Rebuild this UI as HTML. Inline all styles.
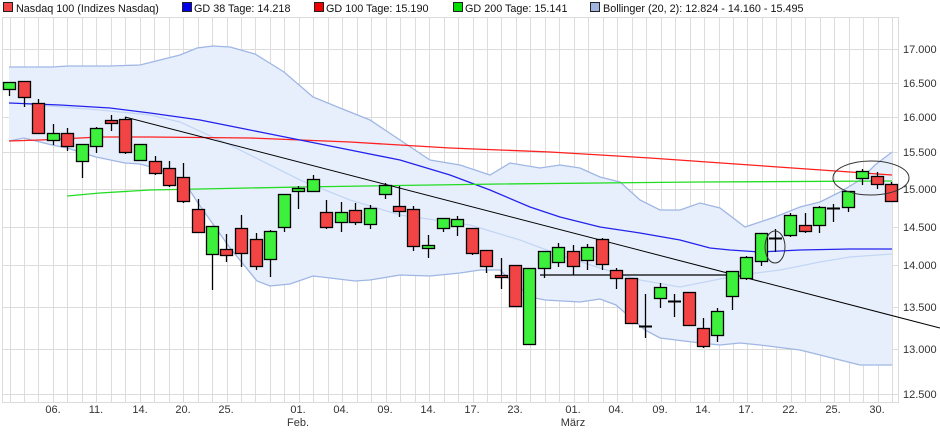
<!DOCTYPE html>
<html><head><meta charset="utf-8"><style>
html,body{margin:0;padding:0;background:#fff;width:940px;height:435px;overflow:hidden}
svg{display:block;font-family:"Liberation Sans",sans-serif}
</style></head><body>
<svg id="c" width="940" height="435" xmlns="http://www.w3.org/2000/svg">
<g id="grid" stroke="#dcdcdc" stroke-width="1"></g>
<path id="band" fill="#e8effc" stroke="none"/>
<polyline id="bu" fill="none" stroke="#9fb6e4" stroke-width="1.3"/>
<polyline id="bl" fill="none" stroke="#9fb6e4" stroke-width="1.3"/>
<polyline fill="none" stroke="#c3d6f5" stroke-width="1.3" points="24,104 100,110 150,115 180,122 230,145 260,160 300,180 350,200 400,215 470,225 520,240 560,255 600,268 640,280 680,287 700,283 740,275 780,270 820,262 850,257 892,254"/>
<polyline fill="none" stroke="#ff2020" stroke-width="1.3" points="9,141 40,140 100,137 150,137 250,138 350,142 450,148 550,152 650,158 750,165 850,172 892,175"/>
<polyline fill="none" stroke="#2222ee" stroke-width="1.3" points="9,103 60,105 110,108 150,113 200,120 260,132 300,140 350,150 400,160 450,175 490,190 530,207 560,217 600,227 640,233 680,240 710,248 730,250 760,252 800,250 850,249 892,249"/>
<polyline fill="none" stroke="#22dd22" stroke-width="1.3" points="67,196 100,193 150,190 200,189 300,187 500,184 700,182 892,181"/>
<line x1="125" y1="117" x2="940" y2="328" stroke="#000" stroke-width="1"/>
<line x1="540" y1="275" x2="728" y2="275" stroke="#000" stroke-width="1.3"/>
<g id="candles"></g>
<ellipse cx="775" cy="247" rx="10" ry="16" fill="none" stroke="#333" stroke-width="1"/>
<ellipse cx="871" cy="178" rx="38" ry="17" fill="none" stroke="#333" stroke-width="1"/>
<g font-size="11" fill="#333">
<text x="903" y="53">17.000</text><text x="903" y="87">16.500</text><text x="903" y="121">16.000</text>
<text x="903" y="156">15.500</text><text x="903" y="193">15.000</text><text x="903" y="231">14.500</text>
<text x="903" y="269">14.000</text><text x="903" y="311">13.500</text><text x="903" y="353">13.000</text>
<text x="903" y="398">12.500</text>
</g>
<g font-size="11" fill="#333" text-anchor="middle" id="xl"></g>
<g font-size="10.8" fill="#111">
<rect x="3.5" y="2.5" width="9" height="9" fill="#f24444" stroke="#222"/><text x="16" y="12">Nasdaq 100 (Indizes Nasdaq)</text>
<rect x="182.5" y="2.5" width="9" height="9" fill="#0000ee" stroke="#222"/><text x="194" y="12">GD 38 Tage: 14.218</text>
<rect x="314.5" y="2.5" width="9" height="9" fill="#ee0000" stroke="#222"/><text x="326" y="12">GD 100 Tage: 15.190</text>
<rect x="453.5" y="2.5" width="9" height="9" fill="#00dd00" stroke="#222"/><text x="465" y="12">GD 200 Tage: 15.141</text>
<rect x="590.5" y="2.5" width="9" height="9" fill="#9fb4e0" stroke="#222"/><text x="603" y="12">Bollinger (20, 2): 12.824 - 14.160 - 15.495</text>
</g>
</svg>
<script>
var NS="http://www.w3.org/2000/svg";
function el(t,a,p){var e=document.createElementNS(NS,t);for(var k in a)e.setAttribute(k,a[k]);p.appendChild(e);return e;}
var g=document.getElementById('grid');
for(var x=9.5;x<900;x+=14.47){el('line',{x1:Math.round(x)+.5,y1:17,x2:Math.round(x)+.5,y2:403},g);}
el('line',{x1:2.5,y1:17,x2:2.5,y2:403},g);el('line',{x1:898.5,y1:17,x2:898.5,y2:403},g);
[17,49,83,117,152,189,227,265,307,349,394,402].forEach(function(y){el('line',{x1:2,y1:y+.5,x2:899,y2:y+.5},g);});
var up="9,67 52,67 68,66 110,66 140,65 180,55 197,48 213,46 230,47 255,54 284,72 313,97 340,108 370,120 385,130 400,140 430,160 460,165 490,175 510,163 540,168 560,165 580,168 600,177 620,182 640,200 660,210 680,210 700,203 720,208 745,227 760,222 775,217 800,207 820,202 840,192 860,180 875,165 892,152";
var lo="9,141 24,138 52,145 67,148 96,157 125,163 140,164 155,168 183,180 198,203 230,248 257,281 270,286 290,284 313,276 330,278 355,281 370,280 400,275 430,276 460,273 480,270 500,270 515,285 535,298 545,300 580,302 600,299 616,305 645,330 660,338 700,343 720,345 740,343 760,345 800,350 820,355 840,360 860,365 892,365";
document.getElementById('bu').setAttribute('points',up);
document.getElementById('bl').setAttribute('points',lo);
var lr=lo.split(' ').reverse().join(' L');
document.getElementById('band').setAttribute('d','M'+up.split(' ').join(' L')+' L'+lr+' Z');
var C=[[9,'g',82,89,82,96],[24,'r',81,97,81,107],[38,'r',103,133,99,133],[53,'g',133,140,124,145],[67,'r',133,146,128,151],[82,'g',144,161,144,178],[96,'g',128,146,127,153],[111,'r',120,123,115,131],[125,'r',119,152,117,154],[140,'g',144,160,144,160],[155,'r',161,173,156,175],[169,'r',168,185,161,187],[183,'r',177,201,163,203],[198,'r',209,232,199,232],[212,'g',226,254,226,290],[226,'r',249,255,234,262],[241,'r',228,253,215,267],[256,'r',239,266,233,270],[270,'g',231,259,230,277],[284,'g',194,227,194,232],[298,'g',188,191,186,209],[313,'g',179,191,175,192],[326,'r',212,227,200,229],[341,'g',212,222,202,232],[355,'r',210,222,203,225],[370,'g',208,224,205,229],[385,'g',185,194,183,199],[399,'r',206,211,186,217],[413,'r',209,246,206,251],[428,'g',245,248,235,258],[443,'g',218,228,218,232],[457,'g',219,226,216,236],[472,'r',228,253,228,255],[486,'r',250,266,250,273],[501,'r',275,277,258,289],[515,'r',265,306,265,307],[529,'g',268,344,268,344],[544,'g',251,268,251,278],[558,'g',247,262,243,267],[573,'r',251,266,245,275],[587,'g',247,260,244,270],[602,'r',239,264,238,270],[616,'r',270,278,268,289],[631,'r',278,323,278,324],[645,'d',326,327,294,338],[660,'g',287,298,283,308],[674,'d',301,302,294,317],[689,'r',292,325,292,326],[703,'r',328,346,318,348],[717,'g',311,335,308,342],[732,'g',271,296,271,310],[746,'g',257,278,256,280],[761,'g',233,261,233,266],[775,'d',238,239,229,252],[790,'g',215,235,213,237],[805,'r',225,231,213,233],[819,'g',207,225,206,233],[833,'d',208,209,204,222],[848,'g',191,207,191,212],[862,'g',171,178,169,185],[877,'r',176,184,172,189],[891,'r',184,201,182,201]];
var cg=document.getElementById('candles');
C.forEach(function(c){var x=c[0];
el('line',{x1:x+.5,y1:c[4],x2:x+.5,y2:c[5],stroke:'#000','stroke-width':1.3},cg);
if(c[1]=='d'){el('line',{x1:x-6,y1:c[2]+.5,x2:x+7,y2:c[2]+.5,stroke:'#000','stroke-width':2},cg);}
else el('rect',{x:x-5.5,y:c[2]+.5,width:12,height:Math.max(2,c[3]-c[2]),fill:c[1]=='g'?'#3cf03c':'#f24444',stroke:'#000','stroke-width':1.3},cg);
});
var xl=document.getElementById('xl');
[[53,'06.'],[96,'11.'],[140,'14.'],[183,'20.'],[226,'25.'],[298,'01.'],[341,'04.'],[385,'09.'],[428,'14.'],[472,'17.'],[515,'23.'],[573,'01.'],[616,'04.'],[660,'09.'],[703,'14.'],[746,'17.'],[790,'22.'],[833,'25.'],[877,'30.']].forEach(function(l){var t=el('text',{x:l[0],y:413},xl);t.textContent=l[1];});
var t1=el('text',{x:298,y:426},xl);t1.textContent='Feb.';
var t2=el('text',{x:573,y:426},xl);t2.textContent='März';
</script>
</body></html>
